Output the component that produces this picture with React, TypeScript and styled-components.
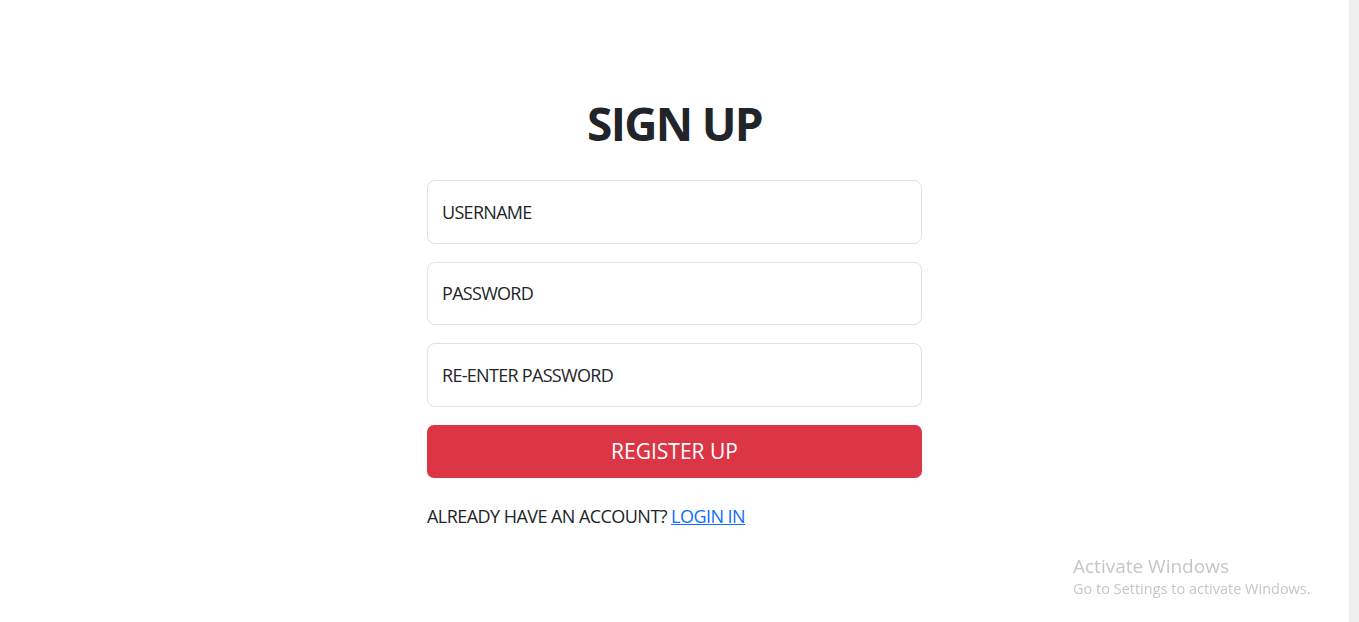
import React from "react";
import styled, { createGlobalStyle } from "styled-components";

const Global = createGlobalStyle`
  body {
    margin: 0;
    background: #ffffff;
    color: #212529;
    font-family: "Open Sans", "Segoe UI", sans-serif;
    overflow: hidden;
  }
  * { box-sizing: border-box; }
`;

const Shell = styled.div`
  display: flex;
  height: 100vh;
`;

const Page = styled.main`
  flex: 1;
  display: flex;
  justify-content: center;
  padding-top: 94px;
`;

const ScrollTrack = styled.div`
  width: 10px;
  flex-shrink: 0;
  background: #efefef;
`;

const Form = styled.form`
  width: 495px;
  display: flex;
  flex-direction: column;
`;

const Title = styled.h1`
  margin: 0 0 28px;
  text-align: center;
  font-size: 46px;
  line-height: 58px;
  font-weight: 700;
  letter-spacing: -1.7px;
  color: #212529;
`;

const Field = styled.input`
  height: 63.5px;
  width: 100%;
  margin-bottom: 18px;
  padding: 0 14px;
  border: 1px solid #dee2e6;
  border-radius: 8px;
  font-family: inherit;
  font-size: 18px;
  letter-spacing: -0.7px;
  color: #212529;
  background: #fff;
  outline: none;
  &::placeholder { color: #212529; opacity: 1; }
`;

const Submit = styled.button`
  height: 53px;
  width: 100%;
  border: none;
  border-radius: 7px;
  background: #dc3545;
  color: #fff;
  font-family: inherit;
  font-size: 21px;
  cursor: pointer;
`;

const Footer = styled.p`
  margin: 25px 0 0;
  font-size: 18px;
  line-height: 27px;
  letter-spacing: -0.55px;
  color: #212529;
`;

const Link = styled.a`
  color: #0d6efd;
  text-decoration: underline;
`;

const Watermark = styled.div`
  position: fixed;
  left: 1073px;
  top: 553px;
  color: #c6c6c6;
  font-family: "Open Sans", sans-serif;
  pointer-events: none;
`;

const WmTitle = styled.div`
  font-size: 19px;
  line-height: 26px;
`;

const WmSub = styled.div`
  font-size: 14.5px;
  line-height: 20px;
`;

export default function App() {
  return (
    <>
      <Global />
      <Shell>
        <Page>
          <Form onSubmit={(e) => e.preventDefault()}>
            <Title>SIGN UP</Title>
            <Field placeholder="USERNAME" />
            <Field placeholder="PASSWORD" type="password" />
            <Field placeholder="RE-ENTER PASSWORD" type="password" />
            <Submit type="submit">REGISTER UP</Submit>
            <Footer>
              ALREADY HAVE AN ACCOUNT? <Link href="#">LOGIN IN</Link>
            </Footer>
          </Form>
        </Page>
        <ScrollTrack />
      </Shell>
      <Watermark>
        <WmTitle>Activate Windows</WmTitle>
        <WmSub>Go to Settings to activate Windows.</WmSub>
      </Watermark>
    </>
  );
}
